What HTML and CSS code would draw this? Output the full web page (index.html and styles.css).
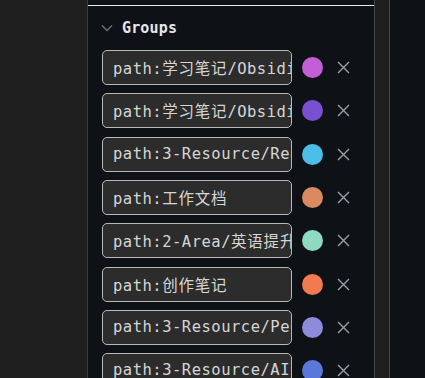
FILE: index.html
```html
<!DOCTYPE html>
<html lang="en">
<head>
  <meta charset="UTF-8">
  <meta name="viewport" content="width=device-width, initial-scale=1.0">
  <title>Graph Groups</title>
  <link rel="stylesheet" href="styles.css">
</head>
<body>
  <aside class="sidebar"></aside>
  <main class="panel">
    <div class="divider"></div>
    <div class="section-head">
      <svg class="chevron" width="12" height="12" viewBox="0 0 12 12">
        <path d="M1 3.5 L6 8.5 L11 3.5" fill="none" stroke="#6f6f6f" stroke-width="1.5"/>
      </svg>
      <h2>Groups</h2>
    </div>
    <ul class="groups">
      <li class="group">
        <div class="query">path:<span class="cjk">学习笔记</span>/Obsidian</div>
        <span class="swatch" style="background:#c45ed6"></span>
        <svg class="remove" width="13" height="13" viewBox="0 0 13 13"><path d="M1 1 L12 12 M12 1 L1 12"/></svg>
      </li>
      <li class="group">
        <div class="query">path:<span class="cjk">学习笔记</span>/Obsidian</div>
        <span class="swatch" style="background:#7a4fd0"></span>
        <svg class="remove" width="13" height="13" viewBox="0 0 13 13"><path d="M1 1 L12 12 M12 1 L1 12"/></svg>
      </li>
      <li class="group">
        <div class="query">path:3-Resource/Reading</div>
        <span class="swatch" style="background:#4bbde6"></span>
        <svg class="remove" width="13" height="13" viewBox="0 0 13 13"><path d="M1 1 L12 12 M12 1 L1 12"/></svg>
      </li>
      <li class="group">
        <div class="query">path:<span class="cjk">工作文档</span></div>
        <span class="swatch" style="background:#d98a5e"></span>
        <svg class="remove" width="13" height="13" viewBox="0 0 13 13"><path d="M1 1 L12 12 M12 1 L1 12"/></svg>
      </li>
      <li class="group">
        <div class="query">path:2-Area/<span class="cjk">英语提升</span></div>
        <span class="swatch" style="background:#8ed9c2"></span>
        <svg class="remove" width="13" height="13" viewBox="0 0 13 13"><path d="M1 1 L12 12 M12 1 L1 12"/></svg>
      </li>
      <li class="group">
        <div class="query">path:<span class="cjk">创作笔记</span></div>
        <span class="swatch" style="background:#f27a4e"></span>
        <svg class="remove" width="13" height="13" viewBox="0 0 13 13"><path d="M1 1 L12 12 M12 1 L1 12"/></svg>
      </li>
      <li class="group">
        <div class="query">path:3-Resource/People</div>
        <span class="swatch" style="background:#8f8bdc"></span>
        <svg class="remove" width="13" height="13" viewBox="0 0 13 13"><path d="M1 1 L12 12 M12 1 L1 12"/></svg>
      </li>
      <li class="group">
        <div class="query">path:3-Resource/AI</div>
        <span class="swatch" style="background:#5a78dc"></span>
        <svg class="remove" width="13" height="13" viewBox="0 0 13 13"><path d="M1 1 L12 12 M12 1 L1 12"/></svg>
      </li>
    </ul>
  </main>
  <div class="scrollbar"></div>
  <div class="rest"></div>
</body>
</html>
```

FILE: styles.css
```css
body {
  margin: 0;
  height: 378px;
  display: flex;
  overflow: hidden;
  background-color: #0e1116;
  font-family: "DejaVu Sans Mono", "Noto Sans CJK SC", monospace;
}
.sidebar {
  width: 87px;
  flex: none;
  background-color: #1f1f1f;
  border-right: 1px solid #3a3a3a;
}
.panel {
  width: 286px;
  flex: none;
  padding-top: 5px;
  background-color: #0e1116;
}
.divider {
  height: 1px;
  background-color: #e8e8e8;
}
.section-head {
  display: flex;
  align-items: center;
  height: 44px;
  padding-left: 13px;
}
.chevron {
  margin-right: 9px;
}
h2 {
  margin: 0;
  font-size: 15px;
  letter-spacing: 0.15px;
  font-weight: bold;
  color: #e6e6e6;
}
.groups {
  list-style-type: none;
  margin: 0;
  padding: 0 0 0 14px;
  display: flex;
  flex-direction: column;
  gap: 8.33px;
}
.group {
  display: flex;
  align-items: center;
  height: 35px;
}
.query {
  box-sizing: border-box;
  width: 190px;
  height: 35px;
  padding: 0 10px;
  border: 1px solid #b8b8b8;
  border-radius: 5px;
  background-color: #2c2c2c;
  color: #d6d6d6;
  font-size: 15.5px;
  letter-spacing: 0.5px;
  line-height: 33px;
  white-space: nowrap;
  overflow: hidden;
}
.cjk {
  font-family: "Noto Sans CJK SC", sans-serif;
  letter-spacing: 0.8px;
}
.swatch {
  width: 21px;
  height: 21px;
  border-radius: 50%;
  margin-left: 10px;
  flex: none;
}
.remove {
  margin-left: 14px;
  flex: none;
  fill: none;
  stroke: #a0a0a0;
  stroke-width: 1.4;
}
.scrollbar {
  width: 14px;
  flex: none;
  background-color: #1e1e1e;
  border-left: 1px solid #464646;
  border-right: 1px solid #464646;
}
.rest {
  flex: 1;
}
```
